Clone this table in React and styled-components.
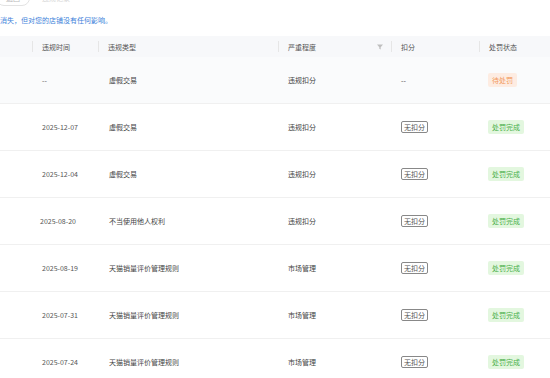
import React from 'react'
import styled, { createGlobalStyle } from 'styled-components'

const GlobalStyle = createGlobalStyle`
    html, body {
        margin: 0;
        padding: 0;
        background: #fff;
        font-family: "Noto Sans CJK SC", "Noto Sans", sans-serif;
        overflow: hidden;
    }
`

const Page = styled.div`
    width: 550px;
    height: 378px;
    overflow: hidden;
`

const TopBar = styled.div`
    display: flex;
    align-items: center;
    gap: 12px;
    margin-top: -10px;
    margin-left: -4px;
    height: 16px;
`

const GhostButton = styled.div`
    width: 34px;
    height: 16px;
    box-sizing: border-box;
    border: 1px solid #e3e3e3;
    border-radius: 8px;
    font-size: 7px;
    color: #bbb;
    display: flex;
    align-items: center;
    justify-content: center;
`

const FaintText = styled.span`
    font-size: 7px;
    color: #d8d8d8;
`

const Notice = styled.div`
    font-size: 7px;
    color: #3d7fda;
    line-height: 10px;
    margin: 9px 0 0 0;
    white-space: nowrap;
`

const cols = '33px 66px 180px 113px 88px 1fr'

const HeaderRow = styled.div`
    display: grid;
    grid-template-columns: ${cols};
    height: 21px;
    margin-top: 11px;
    background: #f7f8fa;
    align-items: center;
`

const HeadCell = styled.div`
    position: relative;
    height: 100%;
    display: flex;
    align-items: center;
    padding-left: 9px;
    font-size: 7px;
    color: #555;

    &::before {
        content: '';
        display: ${p => p.first ? 'none' : 'block'};
        position: absolute;
        left: -1px;
        top: 5px;
        height: 11px;
        width: 1px;
        background: #e6e6e6;
    }
`

const FilterIcon = styled.svg`
    margin-left: auto;
    margin-right: 9px;
`

const Row = styled.div`
    display: grid;
    grid-template-columns: ${cols};
    height: 46px;
    align-items: center;
    border-bottom: 1px solid #f0f0f0;
    background: ${p => p.muted ? '#fafbfc' : '#fff'};
`

const Cell = styled.div`
    padding-left: ${p => p.pad || 9}px;
    font-size: 7px;
    color: #444;
    white-space: nowrap;
`

const DateCell = styled(Cell)`
    color: #555;
    margin-left: ${p => p.shift || 0}px;
`

const OutlineTag = styled.span`
    display: inline-block;
    border: 1px solid #888;
    border-radius: 2px;
    padding: 0 2px;
    line-height: 10px;
    font-size: 7px;
    color: #555;
`

const StatusTag = styled.span`
    display: inline-block;
    padding: 2px 4px;
    line-height: 10px;
    font-size: 7px;
    border-radius: 2px;
    color: ${p => p.pending ? '#f29b5e' : '#4cb04a'};
    background: ${p => p.pending ? '#fdece2' : '#e3f7df'};
`

const rows = [
    { date: '--', type: '虚假交易', level: '违规扣分', score: null, pending: true },
    { date: '2025-12-07', type: '虚假交易', level: '违规扣分', score: '无扣分' },
    { date: '2025-12-04', type: '虚假交易', level: '违规扣分', score: '无扣分' },
    { date: '2025-08-20', type: '不当使用他人权利', level: '违规扣分', score: '无扣分', shift: -2 },
    { date: '2025-08-19', type: '天猫销量评价管理规则', level: '市场管理', score: '无扣分' },
    { date: '2025-07-31', type: '天猫销量评价管理规则', level: '市场管理', score: '无扣分' },
    { date: '2025-07-24', type: '天猫销量评价管理规则', level: '市场管理', score: '无扣分' },
]

const App = () => {
    return (
        <Page>
            <GlobalStyle />
            <TopBar>
                <GhostButton>返回</GhostButton>
                <FaintText>违规记录</FaintText>
            </TopBar>
            <Notice>消失，但对您的店铺没有任何影响。</Notice>
            <HeaderRow>
                <HeadCell first />
                <HeadCell>违规时间</HeadCell>
                <HeadCell>违规类型</HeadCell>
                <HeadCell>
                    严重程度
                    <FilterIcon width="6" height="6" viewBox="0 0 6 6">
                        <path d="M0 0.5 H6 L3.7 3.2 V5.5 L2.3 4.8 V3.2 Z" fill="#bfbfbf" />
                    </FilterIcon>
                </HeadCell>
                <HeadCell>扣分</HeadCell>
                <HeadCell>处罚状态</HeadCell>
            </HeaderRow>
            {rows.map((r, i) => (
                <Row key={i} muted={r.pending}>
                    <Cell />
                    <DateCell shift={r.shift}>{r.date}</DateCell>
                    <Cell pad={10}>{r.type}</Cell>
                    <Cell>{r.level}</Cell>
                    <Cell>{r.score ? <OutlineTag>{r.score}</OutlineTag> : '--'}</Cell>
                    <Cell pad={8}>
                        <StatusTag pending={r.pending}>{r.pending ? '待处罚' : '处罚完成'}</StatusTag>
                    </Cell>
                </Row>
            ))}
        </Page>
    )
}

export default App
